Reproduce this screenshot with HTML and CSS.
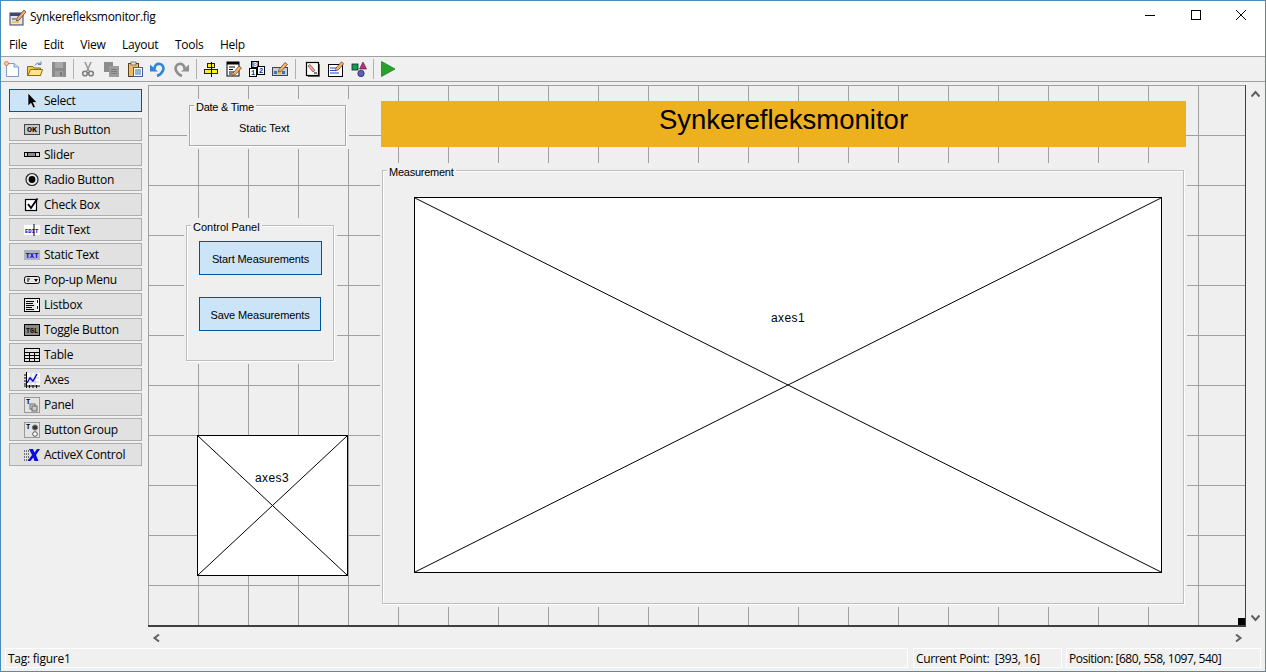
FILE: index.html
```html
<!DOCTYPE html>
<html lang="en">
<head>
  <meta charset="UTF-8" />
  <title>Synkerefleksmonitor.fig</title>
  <link rel="stylesheet" href="styles.css">
</head>
<body>
<div class="window">

  <div class="titlebar">
    <svg class="app-icon" width="18" height="18" viewBox="0 0 18 18">
      <rect x="1" y="5" width="13" height="12" fill="#dfe4ee" stroke="#3a3f55"/>
      <rect x="1" y="5" width="13" height="3" fill="#3a4a78"/>
      <rect x="3" y="10" width="4" height="2" fill="#8a93ad"/>
      <rect x="3" y="13" width="7" height="2" fill="#f3c465"/>
      <path d="M8 10 L15 2 L17 4 L10 12 L7.5 13Z" fill="#f4b183" stroke="#5a3a20" stroke-width=".8"/>
    </svg>
    <span class="title">Synkerefleksmonitor.fig</span>
    <div class="winctl">
      <svg width="12" height="12" viewBox="0 0 12 12"><path d="M1 6.500H11" stroke="#000"/></svg>
      <svg width="12" height="12" viewBox="0 0 12 12"><rect x="1.500" y="1.500" width="9" height="9" fill="none" stroke="#000"/></svg>
      <svg width="12" height="12" viewBox="0 0 12 12"><path d="M1 1L11 11M11 1L1 11" stroke="#000"/></svg>
    </div>
  </div>

  <div class="menubar">
    <span>File</span><span>Edit</span><span>View</span><span>Layout</span><span>Tools</span><span>Help</span>
  </div>

  <div class="toolbar">
    <div class="tgroup">
      <svg width="16" height="16" viewBox="0 0 16 16"><path d="M2.500 2.500H10L14.500 6V15.500H2.500Z" fill="#fff" stroke="#7d9cc4"/><path d="M10 2.500V6H14.500" fill="#cfe0f3" stroke="#7d9cc4"/><circle cx="2.500" cy="2.500" r="2" fill="#ffc9a0" stroke="#e8622a" stroke-width=".8"/></svg>
      <svg width="16" height="16" viewBox="0 0 16 16"><path d="M.5 5.500H6L7 7H13.500V14.500H.5Z" fill="#f2c94c" stroke="#8a6a20"/><path d="M1 14.500L3.500 8.500H15.500L13.500 14.500Z" fill="#ffe680" stroke="#8a6a20"/><path d="M8 4.500C9 2.500 11 1.500 13.500 2.500M14 .5V3.500H11" fill="none" stroke="#5f83ab"/></svg>
      <svg width="16" height="16" viewBox="0 0 16 16" shape-rendering="crispEdges"><rect x="1" y="1" width="14" height="15" fill="#8b8b8b"/><rect x="4" y="1" width="8" height="6" fill="#a9a9a9"/><rect x="4" y="10" width="8" height="6" fill="#a0a0a0"/><rect x="9" y="11" width="2" height="4" fill="#777"/></svg>
    </div>
    <i class="sep"></i>
    <div class="tgroup">
      <svg width="16" height="16" viewBox="0 0 16 16"><path d="M5 1L9 10M11 1L7 10" stroke="#9a9a9a" stroke-width="1.600" fill="none"/><circle cx="5" cy="12.500" r="2.300" fill="none" stroke="#7f7f7f" stroke-width="1.600"/><circle cx="11" cy="12.500" r="2.300" fill="none" stroke="#7f7f7f" stroke-width="1.600"/></svg>
      <svg width="16" height="16" viewBox="0 0 16 16" shape-rendering="crispEdges"><rect x="1" y="1" width="9" height="10" fill="#8c8c8c"/><rect x="6" y="5" width="10" height="11" fill="#9c9c9c"/><path d="M8 8H14M8 10H14M8 12H14" stroke="#7c7c7c"/></svg>
      <svg width="16" height="16" viewBox="0 0 16 16"><rect x="1.500" y="2.500" width="10" height="13" fill="#e6bd6a" stroke="#5c4418"/><rect x="4" y="1" width="5" height="3" fill="#e4e4e4" stroke="#555" stroke-width=".7"/><rect x="6.500" y="6.500" width="9" height="9" fill="#fff" stroke="#3e5f92"/><path d="M8 9H14M8 11H14M8 13H14" stroke="#2f66b8"/></svg>
      <svg width="16" height="16" viewBox="0 0 16 16"><path d="M4.500 8C4.500 4 7 2.500 10 3S14 7 13 9.500 9.500 14 7 15" fill="none" stroke="#2f86d8" stroke-width="2.600"/><path d="M0 3.500V10.500H8Z" fill="#2f86d8"/></svg>
      <svg width="16" height="16" viewBox="0 0 16 16"><path d="M11.500 8C11.500 4 9 2.500 6 3S2 7 3 9.500 6.500 14 9 15" fill="none" stroke="#8f8f8f" stroke-width="2.600"/><path d="M16 3.500V10.500H8Z" fill="#8f8f8f"/></svg>
    </div>
    <i class="sep"></i>
    <div class="tgroup">
      <svg width="16" height="16" viewBox="0 0 16 16" shape-rendering="crispEdges"><rect x="4.500" y="2.500" width="7" height="4" fill="#ffee22" stroke="#222"/><rect x="1.500" y="8.500" width="13" height="4" fill="#ffee22" stroke="#222"/><path d="M8 .5V15.500" stroke="#000"/></svg>
      <svg width="16" height="16" viewBox="0 0 16 16"><rect x="1" y="1" width="12" height="14" fill="#fff" stroke="#000"/><rect x="1" y="1" width="12" height="2.500" fill="#000"/><path d="M3 6H9M3 8.500H7M3 11H9M3 13H6" stroke="#000"/><path d="M7 12L13 5L15.500 7L9.500 13.500L6.500 14.500Z" fill="#f6b26b" stroke="#5a3a20" stroke-width=".7"/></svg>
      <svg width="16" height="16" viewBox="0 0 16 16"><rect x="2.500" y=".5" width="7" height="6" fill="#6a7fa6" stroke="#000"/><rect x=".5" y="7.500" width="7" height="8" fill="#fff" stroke="#000"/><rect x="8.500" y="5.500" width="7" height="8" fill="#fff" stroke="#000"/><text class="ico-txt" x="4" y="6" fill="#fff">3</text><text class="ico-txt" x="2" y="14" fill="#003399">1</text><text class="ico-txt" x="10" y="12" fill="#003399">2</text></svg>
      <svg width="16" height="16" viewBox="0 0 16 16"><rect x=".5" y="6.500" width="15" height="8" fill="#c7ced9" stroke="#444"/><rect x="2" y="10" width="3" height="3" fill="#3d6fb4"/><rect x="6" y="10" width="3" height="3" fill="#e2b93a"/><rect x="10" y="10" width="3" height="3" fill="#3d6fb4"/><path d="M7 8.500L13 1.500L15.500 3.500L9.500 10L6.500 11Z" fill="#f6b26b" stroke="#5a3a20" stroke-width=".7"/></svg>
    </div>
    <i class="sep"></i>
    <div class="tgroup tight">
      <svg width="16" height="16" viewBox="0 0 16 16"><rect x="1.500" y="1.500" width="12" height="13" fill="#fff" stroke="#000" stroke-width="1.200"/><path d="M14.500 3V15.500H3" stroke="#555" fill="none"/><path d="M3 5L8 11L10 9.500L5 3.500Z" fill="#f2a6a0" stroke="#8a3a30" stroke-width=".7"/><path d="M9 12H12" stroke="#000"/></svg>
      <svg width="16" height="16" viewBox="0 0 16 16"><rect x=".5" y="3.500" width="14" height="12" fill="#fff" stroke="#000"/><path d="M2 7H9M2 9.500H8M2 12H11" stroke="#1f45c4"/><path d="M8 7L13.500 .8L15.700 2.700L10.200 9L7.500 9.800Z" fill="#f6b26b" stroke="#5a3a20" stroke-width=".7"/></svg>
      <svg width="16" height="16" viewBox="0 0 16 16"><rect x="1" y="3" width="6" height="6" fill="#12a04a" stroke="#123" stroke-width=".8"/><path d="M12 1L15.500 8H8.500Z" fill="#b0308c" stroke="#512" stroke-width=".6"/><circle cx="10" cy="12.500" r="3.200" fill="#5a5fc8" stroke="#223" stroke-width=".7"/></svg>
    </div>
    <i class="sep"></i>
    <svg width="16" height="16" viewBox="0 0 16 16"><path d="M1.500 .5L15 8L1.500 15.500Z" fill="#27a32c" stroke="#1f7d24" stroke-width=".8"/></svg>
  </div>

  <div class="main">
    <div class="palette">
      <div class="pal-btn selected">
        <svg width="16" height="16" viewBox="0 0 16 16"><path d="M4 0V13L7 10.200L9.200 15L11.400 14L9.200 9.500H13Z" fill="#000" stroke="#fff" stroke-width=".6"/></svg>
        Select
      </div>
      <div class="pal-list">
        <div class="pal-btn">
          <svg width="16" height="16" viewBox="0 0 16 16"><rect x=".5" y="2.500" width="15" height="10" fill="#c8c8c8" stroke="#444"/><text class="ico-txt" x="3" y="10" textLength="10" lengthAdjust="spacingAndGlyphs" fill="#000">OK</text></svg>
          Push Button
        </div>
        <div class="pal-btn">
          <svg width="16" height="16" viewBox="0 0 16 16" shape-rendering="crispEdges"><rect x=".5" y="5.500" width="15" height="4" fill="#d0d0d0" stroke="#000"/><rect x="3" y="6" width="8" height="3" fill="#8a8a8a"/><path d="M3.500 6V9M11.500 6V9" stroke="#000"/></svg>
          Slider
        </div>
        <div class="pal-btn">
          <svg width="16" height="16" viewBox="0 0 16 16"><circle cx="8" cy="7.500" r="6" fill="#e8e8e8" stroke="#222" stroke-width="1.200"/><circle cx="8" cy="7.500" r="3.400" fill="#000"/></svg>
          Radio Button
        </div>
        <div class="pal-btn">
          <svg width="16" height="16" viewBox="0 0 16 16"><rect x="1.500" y="2.500" width="11" height="11" fill="#fff" stroke="#000" stroke-width="1.200"/><path d="M4 7L7 11L13.500 1.500" fill="none" stroke="#000" stroke-width="1.800"/></svg>
          Check Box
        </div>
        <div class="pal-btn">
          <svg width="16" height="16" viewBox="0 0 16 16"><rect y="3" width="16" height="10" fill="#fff"/><text class="ico-txt ico-small" x="1" y="10.500" fill="#0000e0">EDIT</text><path d="M10 2V14" stroke="#000"/></svg>
          Edit Text
        </div>
        <div class="pal-btn">
          <svg width="16" height="16" viewBox="0 0 16 16"><rect y="3" width="16" height="10" fill="#b0b0c4"/><text class="ico-txt" x="1.500" y="11" textLength="13" lengthAdjust="spacingAndGlyphs" fill="#0000e0">TXT</text></svg>
          Static Text
        </div>
        <div class="pal-btn">
          <svg width="16" height="16" viewBox="0 0 16 16"><rect x=".5" y="4.500" width="15" height="7" rx="2" fill="#e8e8e8" stroke="#000"/><path d="M3 7H6M3 9H5" stroke="#000"/><path d="M10 7H14L12 10Z" fill="#000"/></svg>
          Pop-up Menu
        </div>
        <div class="pal-btn">
          <svg width="16" height="16" viewBox="0 0 16 16" shape-rendering="crispEdges"><rect x=".5" y="1.500" width="15" height="13" fill="#e8e8e8" stroke="#000"/><path d="M2 4H10M2 6H9M2 8H10M2 10H8M2 12H10" stroke="#000"/><rect x="12" y="2" width="3" height="12" fill="#fff"/><path d="M13.500 3V6M13.500 9V12" stroke="#0000c0"/></svg>
          Listbox
        </div>
        <div class="pal-btn">
          <svg width="16" height="16" viewBox="0 0 16 16"><rect x=".5" y="2.500" width="15" height="11" fill="#8a8a8a" stroke="#000"/><text class="ico-txt" x="2" y="10.500" textLength="12" lengthAdjust="spacingAndGlyphs" fill="#000">TGL</text></svg>
          Toggle Button
        </div>
        <div class="pal-btn">
          <svg width="16" height="16" viewBox="0 0 16 16" shape-rendering="crispEdges"><rect x=".5" y="1.500" width="15" height="13" fill="#e4e4e4" stroke="#000"/><path d="M1 5.500H15M1 8.500H15M1 11.500H15M5.500 6V14M10.500 6V14" stroke="#000"/></svg>
          Table
        </div>
        <div class="pal-btn">
          <svg width="16" height="16" viewBox="0 0 16 16"><rect x="2" y="1" width="14" height="13" fill="#fff"/><path d="M3 6H15M3 10H15M7 1V13M11 1V13" stroke="#aaa" stroke-width=".6"/><path d="M2.500 0V16M0 14H16M0 3H3M0 6H3M0 9H3M0 12H3M5.500 13V16M9 13V16M12.500 13V16" stroke="#000" fill="none"/><path d="M3 11L6 6L9 9L13 2" fill="none" stroke="#0000e0" stroke-width="1.400"/></svg>
          Axes
        </div>
        <div class="pal-btn">
          <svg width="16" height="16" viewBox="0 0 16 16"><rect x=".5" y=".5" width="15" height="15" fill="#e4e4e4" stroke="#999"/><text class="ico-txt" x="2" y="7" fill="#000">T</text><rect x="6" y="7" width="5" height="5" fill="none" stroke="#666"/><rect x="8" y="9" width="5" height="5" fill="#ccc" stroke="#666"/></svg>
          Panel
        </div>
        <div class="pal-btn">
          <svg width="16" height="16" viewBox="0 0 16 16"><rect x=".5" y=".5" width="15" height="15" fill="#e4e4e4" stroke="#999"/><text class="ico-txt" x="2" y="7" fill="#000">T</text><circle cx="11" cy="5.500" r="2.600" fill="#333" stroke="#777"/><circle cx="11" cy="12" r="2.300" fill="#fff" stroke="#555"/></svg>
          Button Group
        </div>
        <div class="pal-btn">
          <svg width="16" height="16" viewBox="0 0 16 16"><path d="M0 4H6M0 7H5M0 10H5M0 13H5" stroke="#000" stroke-dasharray="1 1"/><path d="M5 2H9L10.500 5.500L13 2H16L12 8L14.500 14H10.500L9.200 10.500L6.500 14H3.500L8 8Z" fill="#0a0ae6"/></svg>
          ActiveX Control
        </div>
      </div>
    </div>

    <div class="work">
      <div class="canvas">
        <div class="mask date-mask">
          <div class="panel">
            <span class="panel-label">Date &amp; Time</span>
            <span class="static-text">Static Text</span>
          </div>
        </div>

        <div class="banner">Synkerefleksmonitor</div>

        <div class="mask control-mask">
          <div class="panel">
            <span class="panel-label">Control Panel</span>
            <div class="gui-btn start-btn">Start Measurements</div>
            <div class="gui-btn save-btn">Save Measurements</div>
          </div>
        </div>

        <div class="axes axes3">
          <svg width="100%" height="100%" viewBox="0 0 100 100" preserveAspectRatio="none"><path d="M0 0L100 100M100 0L0 100" stroke="#000" vector-effect="non-scaling-stroke"/></svg>
          <span class="axes-label">axes3</span>
        </div>

        <div class="mask measure-mask">
          <div class="panel">
            <span class="panel-label">Measurement</span>
            <div class="axes axes1">
              <svg width="100%" height="100%" viewBox="0 0 100 100" preserveAspectRatio="none"><path d="M0 0L100 100M100 0L0 100" stroke="#000" vector-effect="non-scaling-stroke"/></svg>
              <span class="axes-label">axes1</span>
            </div>
          </div>
        </div>

        <div class="resize-handle"></div>
      </div>
      <div class="hscroll">
        <svg width="9" height="8" viewBox="0 0 9 8"><path d="M7 .5L2.500 4L7 7.500" fill="none" stroke="#606060" stroke-width="2"/></svg>
        <svg width="9" height="8" viewBox="0 0 9 8"><path d="M2 .5L6.500 4L2 7.500" fill="none" stroke="#606060" stroke-width="2"/></svg>
      </div>
    </div>

    <div class="vscroll">
      <svg width="9" height="8" viewBox="0 0 9 8"><path d="M.5 6.500L4.500 2L8.500 6.500" fill="none" stroke="#606060" stroke-width="2"/></svg>
      <svg width="9" height="8" viewBox="0 0 9 8"><path d="M.5 1.500L4.500 6L8.500 1.500" fill="none" stroke="#606060" stroke-width="2"/></svg>
    </div>
  </div>

  <div class="statusbar">
    <div class="seg seg-tag">Tag: figure1</div>
    <div class="seg seg-point">Current Point:&nbsp; [393, 16]</div>
    <div class="seg seg-pos">Position: [680, 558, 1097, 540]</div>
  </div>

</div>
</body>
</html>
```

FILE: styles.css
```css
:root {
  --face: #f0f0f0;
  --line: #a0a0a0;
  --blue-fill: #cce4f7;
  --blue-line: #005499;
  --ui-font: "Open Sans", "Noto Sans", sans-serif;
  --fig-font: "Liberation Sans", Arial, sans-serif;
}

* {
  box-sizing: border-box;
}

body {
  margin: 0;
  background: var(--face);
  font-family: var(--ui-font);
  font-size: 12px;
  letter-spacing: -.25px;
  color: #000;
}

.window {
  width: 1266px;
  height: 672px;
  border: 1px solid #4a8dbb;
  display: flex;
  flex-direction: column;
  overflow: hidden;
}

.titlebar {
  height: 31px;
  background: #fff;
  display: flex;
  align-items: center;
  padding-left: 8px;
}

.app-icon {
  margin-right: 3px;
}

.title {
  flex: 1;
  letter-spacing: -.3px;
}

.winctl {
  display: flex;
  gap: 33.5px;
  margin-right: 18px;
  margin-top: -3px;
}

.menubar {
  height: 25px;
  background: #fff;
  border-bottom: 1px solid var(--line);
  display: flex;
  align-items: center;
  gap: 16.5px;
  padding-left: 8px;
}

.toolbar {
  height: 25px;
  border-bottom: 1px solid var(--line);
  display: flex;
  align-items: center;
  padding-left: 3px;
}

.tgroup {
  display: flex;
  gap: 7.25px;
}

.tgroup.tight {
  gap: 7px;
  margin-left: 3px;
}

.sep {
  width: 1px;
  height: 20px;
  background: #b0b0b0;
  margin: 0 6px 0 6.5px;
}

.ico-txt {
  font-family: "Liberation Mono", monospace;
  font-size: 7px;
  font-weight: bold;
  letter-spacing: 0;
}

.ico-small {
  font-size: 5.5px;
}

.main {
  height: 566px;
  display: flex;
}

.palette {
  width: 147px;
  padding: 7px 0 0 8px;
}

.pal-list {
  display: flex;
  flex-direction: column;
  gap: 2px;
  margin-top: 6px;
}

.pal-btn {
  width: 133px;
  height: 23px;
  display: flex;
  align-items: center;
  gap: 4px;
  padding-left: 14px;
  background: #e1e1e1;
  border: 1px solid #adadad;
}

.pal-btn.selected {
  background: var(--blue-fill);
  border-color: var(--blue-line);
}

.work {
  width: 1098px;
  padding-top: 3px;
}

.canvas {
  position: relative;
  width: 1098px;
  height: 542px;
  background-color: #efefef;
  background-image:
    linear-gradient(var(--line) 1px, transparent 1px),
    linear-gradient(90deg, var(--line) 1px, transparent 1px);
  background-size: 50px 50px;
  border-right: 1px solid #404040;
  border-bottom: 2px solid #404040;
}

.mask {
  position: absolute;
  background: #efefef;
  padding: 7px 3px 3px 2px;
}

.date-mask {
  left: 39px;
  top: 14px;
  width: 162px;
  height: 50px;
  padding-top: 6px;
}

.control-mask {
  left: 36px;
  top: 133px;
  width: 153px;
  height: 146px;
}

.measure-mask {
  left: 232px;
  top: 78px;
  width: 807px;
  height: 444px;
}

.panel {
  position: relative;
  height: 100%;
  border: 1px solid #bdbdbd;
  box-shadow: 1px 1px 0 #fff, inset 1px 1px 0 #fff;
  font-family: var(--fig-font);
  font-size: 11px;
  letter-spacing: -.1px;
}

.date-mask .panel {
  border-color: #a8a8a8;
}

.panel-label {
  position: absolute;
  left: 4px;
  top: -5px;
  padding: 0 2px;
  line-height: 12px;
  background: #efefef;
  letter-spacing: -.25px;
}

.control-mask .panel-label {
  letter-spacing: 0;
}

.static-text {
  position: absolute;
  left: 49px;
  top: 16px;
  letter-spacing: 0;
}

.banner {
  position: absolute;
  left: 233px;
  top: 16px;
  width: 805px;
  height: 46px;
  background: #edb120;
  font-family: var(--fig-font);
  font-size: 27.5px;
  letter-spacing: 0;
  line-height: 38px;
  text-align: center;
}

.gui-btn {
  position: absolute;
  left: 12px;
  height: 34px;
  background: var(--blue-fill);
  border: 1px solid var(--blue-line);
  text-align: center;
  line-height: 34px;
}

.start-btn {
  top: 15px;
  width: 123px;
}

.save-btn {
  top: 71px;
  width: 122px;
}

.axes {
  position: absolute;
  background: #fff;
  border: 1px solid #000;
  font-family: var(--fig-font);
}

.axes svg {
  display: block;
}

.axes3 {
  left: 49px;
  top: 350px;
  width: 151px;
  height: 141px;
}

.axes1 {
  left: 31px;
  top: 26px;
  width: 748px;
  height: 376px;
}

.axes-label {
  position: absolute;
  font-size: 12px;
  letter-spacing: .4px;
  line-height: 14px;
}

.axes3 .axes-label {
  left: 57px;
  top: 35px;
}

.axes1 .axes-label {
  left: 356px;
  top: 113px;
}

.resize-handle {
  position: absolute;
  right: 0;
  bottom: 0;
  width: 7px;
  height: 7px;
  background: #000;
}

.hscroll {
  height: 21px;
  display: flex;
  justify-content: space-between;
  align-items: center;
  padding: 0 3px 0 4px;
}

.vscroll {
  width: 19px;
  display: flex;
  flex-direction: column;
  justify-content: space-between;
  padding: 8px 0 26px 5px;
}

.statusbar {
  display: flex;
  height: 20px;
  margin-left: 4px;
}

.seg {
  border: 1px solid #fff;
  padding: 1px 0 0 2px;
  line-height: 18px;
  white-space: nowrap;
}

.seg-tag {
  width: 903px;
  margin-right: 5px;
}

.seg-point {
  width: 149px;
  margin-right: 4px;
  letter-spacing: -.37px;
}

.seg-pos {
  width: 195px;
  letter-spacing: -.48px;
}
```
